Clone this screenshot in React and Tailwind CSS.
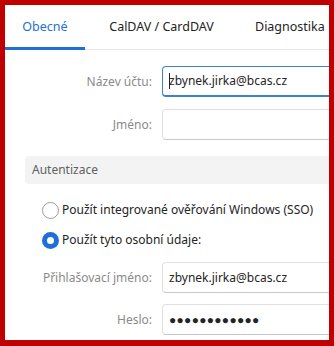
import { useState } from 'react';

const FONT = { fontFamily: '"Noto Sans", "Open Sans", sans-serif' };

const TABS = ['Obecné', 'CalDAV / CardDAV', 'Diagnostika'];

function Field({ label, value, focused, password }) {
  return (
    <div className="flex items-center h-[31px]">
      <div className="w-[157px] pr-[10px] text-right text-[12px] text-[#8a8a8a] shrink-0 whitespace-nowrap">{label}</div>
      <div
        className={`h-full w-[200px] shrink-0 rounded-[4px] border flex items-center pl-[6px] text-[12px] text-[#242424] ${
          focused ? 'border-[#3b82d6] border-b-2' : 'border-[#e0e0e0] border-b-[#c8c8c8]'
        }`}>
        {focused && <span className="w-px h-[16px] bg-[#222] -mr-px" />}
        {password ? <span className="tracking-[0.3px] text-[12px]">{'●'.repeat(12)}</span> : value}
      </div>
    </div>
  );
}

function Radio({ checked, label }) {
  return (
    <div className="flex items-center gap-[3px] h-[20px] pl-[37px] whitespace-nowrap">
      {checked ? (
        <span className="w-[17px] h-[17px] shrink-0 rounded-full bg-[#1e6fd9] flex items-center justify-center">
          <span className="w-[7px] h-[7px] rounded-full bg-white" />
        </span>
      ) : (
        <span className="w-[17px] h-[17px] shrink-0 rounded-full border border-[#9a9a9a] bg-white" />
      )}
      <span className="text-[12px] text-[#242424]">{label}</span>
    </div>
  );
}

export default function App() {
  const [tab] = useState(0);
  return (
    <div style={FONT} className="w-[334px] h-[346px] bg-[#c00000] pt-[5px] px-[5px] pb-[6px]">
      <div className="w-full h-full bg-white overflow-hidden">
        {/* Tabs */}
        <div className="flex h-[45px] border-b border-[#e6e6e6]">
          {TABS.map((t, i) => (
            <div
              key={t}
              className={`relative flex items-center text-[12.5px] whitespace-nowrap ${
                i === 0 ? 'w-[80px] justify-center text-[#1e6fd9]' : i === 1 ? 'w-[153px] justify-center text-[#242424]' : 'pl-[17px] text-[#242424]'
              }`}>
              {t}
              {i === tab && <span className="absolute left-0 right-0 bottom-[-1px] h-[3px] bg-[#1e6fd9]" />}
            </div>
          ))}
        </div>

        {/* Account */}
        <div className="pt-[16px] flex flex-col gap-[12px]">
          <Field label="Název účtu:" value="zbynek.jirka@bcas.cz" focused />
          <Field label="Jméno:" value="" />
        </div>

        {/* Auth section */}
        <div className="mt-[16px] ml-[20px] h-[28px] bg-[#f3f3f3] rounded-l-[4px] flex items-center pl-[7px] text-[12px] text-[#616161]">
          Autentizace
        </div>
        <div className="pt-[16px] flex flex-col gap-[10px]">
          <Radio label="Použít integrované ověřování Windows (SSO)" />
          <Radio checked label="Použít tyto osobní údaje:" />
        </div>
        <div className="pt-[12px] flex flex-col gap-[11px]">
          <Field label="Přihlašovací jméno:" value="zbynek.jirka@bcas.cz" />
          <Field label="Heslo:" password />
        </div>
      </div>
    </div>
  );
}
